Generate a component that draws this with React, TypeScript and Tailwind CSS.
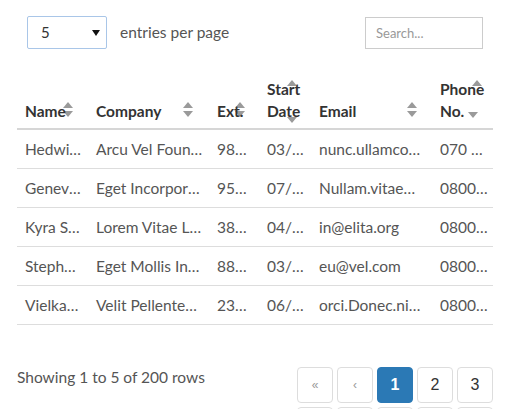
import React from "react";

type Row = string[];

const columns = [
  { label: "Name", width: 71, pad: "pr-[6px]" },
  { label: "Company", width: 121, pad: "pr-[6px]" },
  { label: "Ext.", width: 50, pad: "pr-2" },
  { label: "Start Date", width: 52, pad: "pr-[3px]" },
  { label: "Email", width: 121, pad: "pr-2" },
  { label: "Phone No.", width: 61, pad: "pr-[3px]" },
];

const rows: Row[] = [
  ["Hedwig F. Nguyen", "Arcu Vel Foundation", "9875", "03/27/2017", "nunc.ullamcorper@metusvitae.com", "070 8206 9605"],
  ["Genevieve U. Watts", "Eget Incorporated", "9557", "07/18/2017", "Nullam.vitae@egestas.edu", "0800 025698"],
  ["Kyra S. Baldwin", "Lorem Vitae Limited", "3854", "04/14/2016", "in@elita.org", "0800 237 8846"],
  ["Stephen V. Hill", "Eget Mollis Institute", "8820", "03/03/2016", "eu@vel.com", "0800 682 4591"],
  ["Vielka Q. Chapman", "Velit Pellentesque Ultricies Institute", "2307", "06/25/2017", "orci.Donec.nibh@mauriserat.com", "0800 181 5795"],
];

const Up = () => (
  <svg width="10" height="6" viewBox="0 0 10 6">
    <path d="M5 0 L10 6 H0 Z" fill="#9a9a9a" />
  </svg>
);

const Down = () => (
  <svg width="10" height="6" viewBox="0 0 10 6">
    <path d="M0 0 H10 L5 6 Z" fill="#9a9a9a" />
  </svg>
);

// compact double arrow used on single-line headers
const SortBoth = () => (
  <svg width="10" height="15" viewBox="0 0 10 15">
    <path d="M5 0 L10 6 H0 Z" fill="#9a9a9a" />
    <path d="M0 9 H10 L5 15 Z" fill="#9a9a9a" />
  </svg>
);

const SortIcon = ({ index }: { index: number }) => {
  if (index === 0) return <span className="absolute left-[46px] top-[32px]"><SortBoth /></span>;
  if (index === 1) return <span className="absolute left-[95px] top-[32px]"><SortBoth /></span>;
  if (index === 2) return <span className="absolute left-[26px] top-[32px]"><SortBoth /></span>;
  if (index === 4) return <span className="absolute left-[96px] top-[32px]"><SortBoth /></span>;
  if (index === 3)
    return (
      <>
        <span className="absolute left-[28px] top-[10px] flex"><Up /></span>
        <span className="absolute left-[28px] top-[47px] flex"><Down /></span>
      </>
    );
  return (
    <>
      <span className="absolute left-[40px] top-[10px] flex"><Up /></span>
      <span className="absolute left-[36px] top-[42px] flex"><Down /></span>
    </>
  );
};

const PageButton = ({ children, active, muted }: { children: React.ReactNode; active?: boolean; muted?: boolean }) => (
  <div
    className={
      active
        ? "w-9 h-9 rounded-[4px] border border-[#2b79b5] bg-[#2b79b5] text-white font-bold text-[16px] flex items-center justify-center"
        : muted
        ? "w-9 h-9 rounded-[4px] border border-[#dddddd] bg-white text-[#999] text-[12px] flex items-center justify-center"
        : "w-9 h-9 rounded-[4px] border border-[#dddddd] bg-white text-[#333] text-[16px] flex items-center justify-center"
    }
  >
    {children}
  </div>
);

export default function App() {
  return (
    <div className="h-[409px] w-[520px] overflow-hidden bg-white font-['Lato','Liberation_Sans',sans-serif]">
      <div className="w-[476px] ml-[17px] pt-[16px]">
        {/* toolbar */}
        <div className="flex items-center justify-between">
          <div className="flex items-center ml-[10px] gap-[13px]">
            <div className="w-[80px] h-[33px] border border-[#a9c6e8] rounded-[2px] flex items-center justify-between pl-[13px] pr-[6px] text-[15px] text-[#333]">
              <span>5</span>
              <svg width="8" height="6" viewBox="0 0 8 6">
                <path d="M0 0 H8 L4 6 Z" fill="#111" />
              </svg>
            </div>
            <span className="text-[15.5px] text-[#555]">entries per page</span>
          </div>
          <input
            placeholder="Search..."
            className="mr-[10px] w-[118px] h-[32px] border border-[#cccccc] pl-[10px] text-[13px] text-[#555] placeholder:text-[#999] outline-none font-['Lato','Liberation_Sans',sans-serif]"
          />
        </div>

        {/* table */}
        <table className="mt-[21px] w-[476px] table-fixed border-collapse text-[15.5px] leading-[22px]">
          <colgroup>
            {columns.map((c) => (
              <col key={c.label} style={{ width: c.width }} />
            ))}
          </colgroup>
          <thead>
            <tr className="border-b-2 border-[#d6d6d6]">
              {columns.map((c, i) => (
                <th key={c.label} className="relative align-bottom text-left font-bold text-[#333] px-2 pt-2 pb-[6px]">
                  <SortIcon index={i} />
                  <span className="relative">{c.label}</span>
                </th>
              ))}
            </tr>
          </thead>
          <tbody>
            {rows.map((r, ri) => (
              <tr key={ri} className="border-b border-[#dddddd]">
                {r.map((cell, ci) => (
                  <td
                    key={ci}
                    className={`pl-2 ${columns[ci].pad} py-2 text-[#555] overflow-hidden text-ellipsis whitespace-nowrap`}
                  >
                    {cell}
                  </td>
                ))}
              </tr>
            ))}
          </tbody>
        </table>

        {/* footer */}
        <div className="mt-[41px] flex items-start justify-between">
          <span className="text-[15.5px] leading-[22px] text-[#555]">Showing 1 to 5 of 200 rows</span>
          <div className="mt-[1px] w-[196px] flex flex-wrap gap-1 font-['Liberation_Sans',sans-serif]">
            <PageButton muted>«</PageButton>
            <PageButton muted>‹</PageButton>
            <PageButton active>1</PageButton>
            <PageButton>2</PageButton>
            <PageButton>3</PageButton>
            <PageButton>4</PageButton>
            <PageButton>5</PageButton>
            <PageButton>…</PageButton>
            <PageButton>›</PageButton>
            <PageButton>»</PageButton>
          </div>
        </div>
      </div>
    </div>
  );
}
